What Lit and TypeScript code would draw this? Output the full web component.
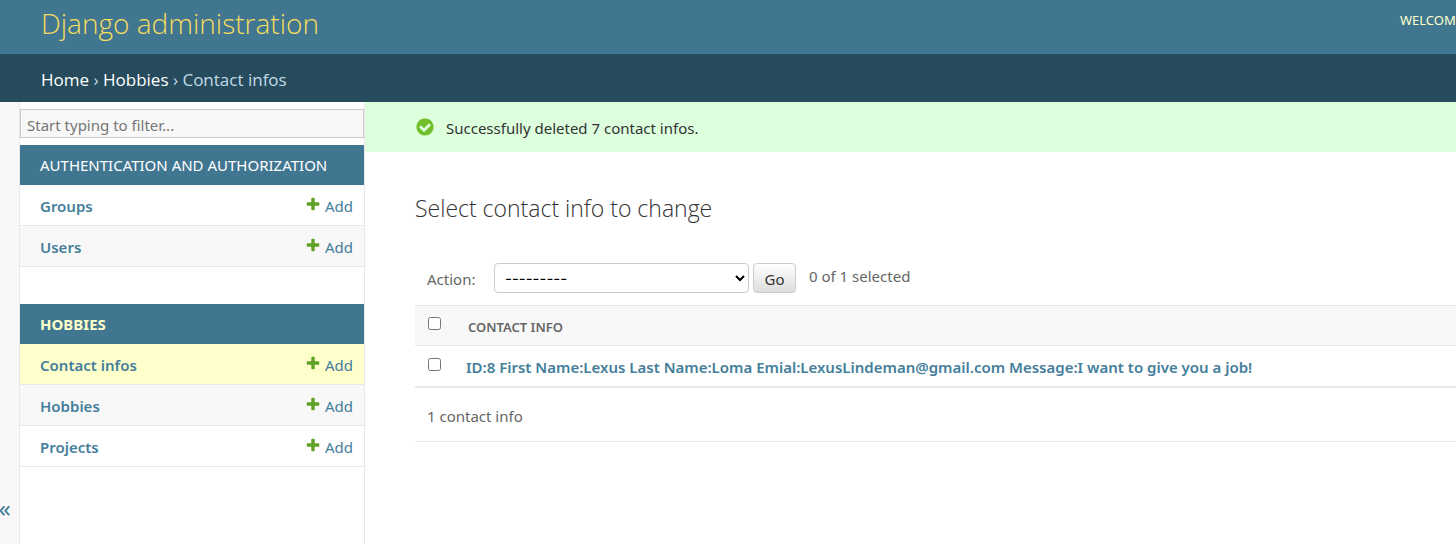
import { LitElement, html, css, svg } from "lit";
import { customElement, property } from "lit/decorators.js";
import { classMap } from "lit/directives/class-map.js";

interface Model {
  name: string;
  current?: boolean;
}

@customElement("nav-module")
class NavModule extends LitElement {
  @property() caption = "";
  @property({ type: Boolean }) current = false;
  @property({ attribute: false }) models: Model[] = [];

  static styles = css`
    :host {
      display: block;
    }
    table {
      width: 100%;
      border-collapse: separate;
      border-spacing: 0;
    }
    caption {
      box-sizing: border-box;
      height: 40px;
      padding: 0 20px;
      background: #417690;
      text-align: left;
      font-size: 15px;
      line-height: 40px;
      text-transform: uppercase;
      white-space: nowrap;
    }
    a {
      color: #447e9b;
      text-decoration: none;
    }
    .section {
      color: #fff;
    }
    .section.current {
      color: #ffc;
      font-weight: 700;
    }
    th,
    td {
      box-sizing: border-box;
      height: 41px;
      padding: 2px 0 0;
      border-bottom: 1px solid #e8e8e8;
      font-size: 15px;
      line-height: 20px;
      vertical-align: middle;
    }
    th {
      padding-left: 20px;
      text-align: left;
      font-weight: 600;
    }
    td {
      padding-right: 11px;
    }
    tr.even {
      background: #f8f8f8;
    }
    tr.current {
      background: #ffc;
    }
    .add {
      display: flex;
      justify-content: flex-end;
      align-items: center;
      gap: 4px;
    }
    .add svg {
      width: 16px;
      height: 16px;
      padding-bottom: 4px;
    }
  `;

  render() {
    return html`
      <table>
        <caption>
          <a href="#" class=${classMap({ section: true, current: this.current })}>${this.caption}</a>
        </caption>
        <tbody>
          ${this.models.map(
            (m, i) => html`
              <tr class=${classMap({ even: i % 2 === 1, current: !!m.current })}>
                <th scope="row"><a href="#">${m.name}</a></th>
                <td>
                  <a href="#" class="add">
                    <svg viewBox="0 0 1792 1792" aria-hidden="true">
                      <path
                        fill="#5fa225"
                        d="M1600 796v192q0 40-28 68t-68 28h-416v416q0 40-28 68t-68 28h-192q-40 0-68-28t-28-68v-416h-416q-40 0-68-28t-28-68v-192q0-40 28-68t68-28h416v-416q0-40 28-68t68-28h192q40 0 68 28t28 68v416h416q40 0 68 28t28 68z"
                      />
                    </svg>
                    <span>Add</span>
                  </a>
                </td>
              </tr>
            `
          )}
        </tbody>
      </table>
    `;
  }
}

const successIcon = svg`
  <svg class="tick" viewBox="0 0 1792 1792" aria-hidden="true">
    <path fill="#70bf2b" d="M1412 734q0-28-18-46l-91-90q-19-19-45-19t-45 19l-408 407-226-226q-19-19-45-19t-45 19l-91 90q-18 18-18 46 0 27 18 45l362 362q19 19 45 19 27 0 46-19l543-543q18-18 18-45zm252 162q0 209-103 385.5t-279.500 279.500-385.500 103-385.500-103-279.500-279.500-103-385.500 103-385.500 279.500-279.500 385.500-103 385.500 103 279.500 279.500 103 385.500z"/>
  </svg>`;

@customElement("app-root")
class AppRoot extends LitElement {
  static styles = css`
    :host {
      display: flex;
      flex-direction: column;
      min-height: 100vh;
      overflow: hidden;
      background: #fff;
      color: #333;
      font-family: "Noto Sans", "Open Sans", sans-serif;
      font-size: 15px;
      line-height: 20px;
    }
    a {
      color: #447e9b;
      text-decoration: none;
    }
    .header {
      display: flex;
      justify-content: space-between;
      height: 54px;
      padding-left: 41px;
      background: #417690;
      overflow: hidden;
    }
    .brand {
      margin: 0;
      font-family: "Open Sans", sans-serif;
      font-size: 28px;
      font-weight: 300;
      line-height: 46px;
    }
    .brand a {
      color: #f5dd5d;
    }
    .user-tools {
      width: 56px;
      color: #ffc;
      font-size: 13px;
      line-height: 40px;
      white-space: nowrap;
    }
    .breadcrumbs {
      box-sizing: border-box;
      height: 48px;
      padding: 2px 41px 0;
      background: #264b5d;
      color: #c4dce8;
      font-family: "Open Sans", sans-serif;
      font-size: 17px;
      line-height: 48px;
    }
    .breadcrumbs a {
      color: #fff;
    }
    .body {
      display: flex;
      flex: 1;
    }
    .toggle {
      display: flex;
      align-items: flex-end;
      justify-content: center;
      box-sizing: border-box;
      width: 20px;
      padding: 0 10px 26px 0;
      border: 0;
      border-right: 1px solid #e8e8e8;
      background: #f8f8f8;
      color: #447e9b;
      font: 24px/20px "Noto Sans", sans-serif;
    }
    .sidebar {
      display: flex;
      flex-direction: column;
      box-sizing: border-box;
      width: 345px;
      flex: none;
      padding-top: 7px;
      border-right: 1px solid #e8e8e8;
    }
    .filter {
      box-sizing: border-box;
      width: 100%;
      height: 29px;
      margin-bottom: 7px;
      padding: 3px 6px 0;
      border: 1px solid #ccc;
      background: #f8f8f8;
      color: #333;
      font: 15px/20px "Noto Sans", sans-serif;
    }
    .filter::placeholder {
      color: #757575;
    }
    .modules {
      display: grid;
      gap: 37px;
    }
    .main {
      flex: 1;
      min-width: 0;
    }
    .message {
      display: flex;
      align-items: center;
      gap: 12px;
      box-sizing: border-box;
      height: 50px;
      padding: 2px 50px 0;
      background: #dfd;
    }
    .tick {
      width: 20px;
      height: 20px;
      margin: -3px -1px 0 0;
    }
    .content {
      padding: 40px 0 0 50px;
    }
    h2 {
      margin: 0;
      font-family: "Open Sans", sans-serif;
      font-size: 23px;
      line-height: 32px;
      font-weight: 300;
    }
    .actions {
      display: flex;
      align-items: center;
      margin-top: 39px;
      padding: 0 12px 12px;
      color: #666;
    }
    .actions label {
      width: 50px;
      padding-top: 2px;
    }
    .actions select {
      box-sizing: border-box;
      width: 255px;
      height: 30px;
      margin: 0 4px 0 17px;
      padding: 0 6px;
      border: 1px solid #ccc;
      border-radius: 4px;
      background: #fff;
      color: #000;
      font: 15px/20px Inter, sans-serif;
    }
    .actions button {
      box-sizing: border-box;
      width: 43px;
      height: 30px;
      margin-right: 13px;
      padding: 2px 0 0;
      border: 1px solid #ccc;
      border-radius: 4px;
      background: linear-gradient(#fff, #ddd);
      color: #333;
      font: 15px/20px "Noto Sans", sans-serif;
    }
    .counter {
      padding-bottom: 4px;
    }
    .results {
      width: 100%;
      border-collapse: separate;
      border-spacing: 0;
      border-top: 1px solid #e8e8e8;
      border-bottom: 1px solid #e8e8e8;
    }
    .results th,
    .results td {
      box-sizing: border-box;
      height: 40px;
      padding: 0;
      border-bottom: 1px solid #e8e8e8;
      text-align: left;
      font-weight: 600;
    }
    .results tbody tr > * {
      height: 41px;
    }
    .results .check {
      width: 51px;
      padding-left: 13px;
    }
    .check input {
      display: block;
      width: 13px;
      height: 13px;
      margin: 0 0 4px;
    }
    .results thead th {
      background: #f8f8f8;
      color: #666;
      font-size: 13px;
    }
    .results thead .label {
      padding: 3px 2px 0;
    }
    .results tbody .label {
      padding-top: 2px;
    }
    .paginator {
      margin: 0;
      padding: 18px 12px 15px;
      border-bottom: 1px solid #e8e8e8;
      color: #666;
    }
  `;

  private auth: Model[] = [{ name: "Groups" }, { name: "Users" }];
  private hobbies: Model[] = [
    { name: "Contact infos", current: true },
    { name: "Hobbies" },
    { name: "Projects" },
  ];

  render() {
    return html`
      <header class="header">
        <h1 class="brand"><a href="#">Django administration</a></h1>
        <div class="user-tools">WELCOME</div>
      </header>
      <nav class="breadcrumbs" aria-label="Breadcrumbs">
        <a href="#">Home</a> › <a href="#">Hobbies</a> › Contact infos
      </nav>
      <div class="body">
        <button class="toggle" aria-label="Toggle navigation">«</button>
        <nav class="sidebar" aria-label="Sidebar">
          <input class="filter" type="search" placeholder="Start typing to filter..." aria-label="Filter navigation items" />
          <div class="modules">
            <nav-module caption="Authentication and Authorization" .models=${this.auth}></nav-module>
            <nav-module caption="Hobbies" current .models=${this.hobbies}></nav-module>
          </div>
        </nav>
        <main class="main">
          <div class="message">${successIcon}<span>Successfully deleted 7 contact infos.</span></div>
          <div class="content">
            <h2>Select contact info to change</h2>
            <div class="actions">
              <label for="action">Action:</label>
              <select id="action">
                <option>---------</option>
                <option>Delete selected contact infos</option>
              </select>
              <button type="submit">Go</button>
              <span class="counter">0 of 1 selected</span>
            </div>
            <table class="results">
              <thead>
                <tr>
                  <th class="check"><input type="checkbox" aria-label="Select all" /></th>
                  <th class="label" scope="col">CONTACT INFO</th>
                </tr>
              </thead>
              <tbody>
                <tr>
                  <td class="check"><input type="checkbox" aria-label="Select contact info 8" /></td>
                  <th class="label" scope="row">
                    <a href="#">ID:8 First Name:Lexus Last Name:Loma Emial:LexusLindeman@gmail.com Message:I want to give you a job!</a>
                  </th>
                </tr>
              </tbody>
            </table>
            <p class="paginator">1 contact info</p>
          </div>
        </main>
      </div>
    `;
  }
}
